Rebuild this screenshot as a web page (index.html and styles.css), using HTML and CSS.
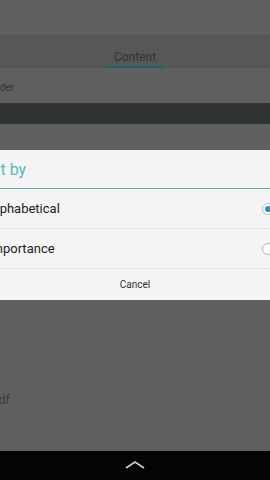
FILE: index.html
```html
<!DOCTYPE html>
<html lang="en">
<head>
    <meta charset="UTF-8">
    <meta name="viewport" content="width=device-width, initial-scale=1.0">
    <title>Sort by</title>
    <link rel="stylesheet" href="styles.css">
</head>
<body>
    <div class="screen">
        <div class="status-area"></div>
        <div class="tab-bar">
            <span class="tab">Content</span>
        </div>
        <div class="row-header"><span class="row-text">Header</span></div>
        <div class="dark-band"></div>
        <div class="content">
            <span class="file-name">asdf</span>
        </div>
        <div class="nav-bar">
            <svg class="chevron" width="20" height="10" viewBox="0 0 20 10">
                <polyline points="1,8 10,2 19,8" fill="none" stroke="#cfcfcf" stroke-width="1.6"/>
            </svg>
        </div>

        <div class="dialog">
            <div class="dialog-title">Sort by</div>
            <div class="option">
                <span class="option-label">Alphabetical</span>
                <span class="radio checked"></span>
            </div>
            <div class="option">
                <span class="option-label">Importance</span>
                <span class="radio"></span>
            </div>
            <div class="cancel">Cancel</div>
        </div>
    </div>
</body>
</html>
```

FILE: styles.css
```css
body {
    margin: 0;
    font-family: Roboto, "Noto Sans", sans-serif;
    background: #5f5f5f;
}

.screen {
    width: 270px;
    height: 480px;
    position: relative;
    overflow: hidden;
    display: flex;
    flex-direction: column;
    background: #5f5f5f;
}

.status-area {
    height: 35px;
    background: #606060;
}

.tab-bar {
    height: 33px;
    background: #575757;
    display: flex;
    justify-content: center;
    align-items: flex-end;
}
.tab {
    width: 60px;
    height: 23px;
    padding-top: 6px;
    text-align: center;
    font-size: 12px;
    line-height: 12px;
    color: #333;
    border-bottom: 2px solid #1e6465;
    box-sizing: border-box;
}

.row-header {
    height: 35px;
    padding-top: 4px;
    box-sizing: border-box;
    display: flex;
    align-items: center;
}
.row-text {
    font-size: 10px;
    color: #333;
    margin-left: -18px;
}

.dark-band {
    height: 21px;
    background: #2f3333;
}

.content {
    flex: 1;
    position: relative;
}
.file-name {
    position: absolute;
    left: -14px;
    top: 269px;
    font-size: 12px;
    color: #3a3a3a;
}

.nav-bar {
    height: 29px;
    background: #050505;
    display: flex;
    justify-content: center;
    align-items: center;
}
.chevron {
    margin-top: -2px;
}

/* dialog sits over the dimmed screen */
.dialog {
    position: absolute;
    top: 150px;
    left: -30px;
    width: 330px;
    background: #f4f4f4;
}
.dialog-title {
    height: 38px;
    line-height: 40px;
    padding-left: 6px;
    font-size: 16px;
    color: #5ab7bb;
    border-bottom: 1.5px solid #5aaeb2;
}
.option {
    height: 39px;
    display: flex;
    align-items: center;
    justify-content: space-between;
    border-bottom: 1px solid #e2e2e2;
    padding-left: 18px;
    padding-right: 26px;
}
.option-label {
    font-size: 13px;
    color: #222;
}
.radio {
    width: 10px;
    height: 10px;
    border-radius: 50%;
    border: 1px solid #b8b8b8;
    background: #fafafa;
    position: relative;
}
.radio.checked {
    border-color: #a9c8cc;
}
.radio.checked::after {
    content: '';
    position: absolute;
    left: 2px;
    top: 2px;
    width: 6px;
    height: 6px;
    border-radius: 50%;
    background: #3a8fa6;
}
.cancel {
    height: 31px;
    line-height: 31px;
    text-align: center;
    font-size: 10px;
    color: #333;
}
```
